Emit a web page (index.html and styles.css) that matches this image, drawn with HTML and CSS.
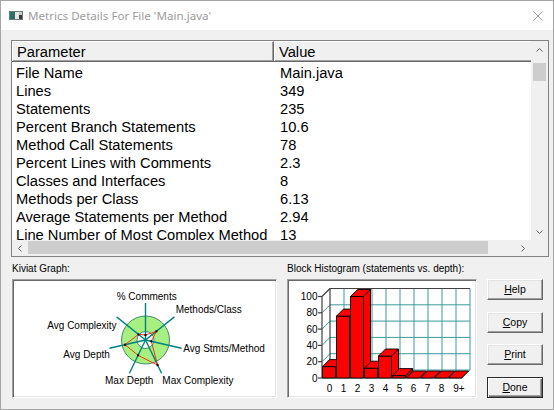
FILE: index.html
```html
<!DOCTYPE html>
<html>
<head>
<meta charset="utf-8">
<link rel="stylesheet" href="styles.css">
</head>
<body>
<div class="window">
  <div class="titlebar">
    <svg class="app-icon" width="14" height="9" viewBox="0 0 14 9">
      <rect x="0" y="0" width="14" height="9" fill="#6d7b7b"/>
      <rect x="1" y="1" width="5" height="7" fill="#2f6f6a"/>
      <rect x="6" y="1" width="4" height="7" fill="#e6e6e6"/>
      <rect x="10" y="1" width="3" height="3" fill="#c8c8c8"/>
      <rect x="10" y="4" width="3" height="4" fill="#3a3a3a"/>
    </svg>
    <span class="title">Metrics Details For File 'Main.java'</span>
    <svg class="close" width="10" height="10" viewBox="0 0 10 10">
      <path d="M0.5 0.5 L9.5 9.5 M9.5 0.5 L0.5 9.5" stroke="#999" stroke-width="1" fill="none"/>
    </svg>
  </div>
  <div class="client">
    <div class="list">
      <div class="list-main">
        <div class="list-header">
          <div class="hcell c1">Parameter</div>
          <div class="hcell c2">Value</div>
        </div>
        <div class="list-rows">
          <div class="row"><span class="c1">File Name</span><span class="c2">Main.java</span></div>
          <div class="row"><span class="c1">Lines</span><span class="c2">349</span></div>
          <div class="row"><span class="c1">Statements</span><span class="c2">235</span></div>
          <div class="row"><span class="c1">Percent Branch Statements</span><span class="c2">10.6</span></div>
          <div class="row"><span class="c1">Method Call Statements</span><span class="c2">78</span></div>
          <div class="row"><span class="c1">Percent Lines with Comments</span><span class="c2">2.3</span></div>
          <div class="row"><span class="c1">Classes and Interfaces</span><span class="c2">8</span></div>
          <div class="row"><span class="c1">Methods per Class</span><span class="c2">6.13</span></div>
          <div class="row"><span class="c1">Average Statements per Method</span><span class="c2">2.94</span></div>
          <div class="row"><span class="c1">Line Number of Most Complex Method</span><span class="c2">13</span></div>
        </div>
      </div>
      <div class="vscroll">
        <div class="sbtn vbtn">
          <svg width="7" height="4" viewBox="0 0 7 4"><polyline points="0.5,3.5 3.5,0.5 6.5,3.5" fill="none" stroke="#606060" stroke-width="1"/></svg>
        </div>
        <div class="vthumb"></div>
        <div class="sbtn vbtn vdown">
          <svg width="7" height="4" viewBox="0 0 7 4"><polyline points="0.5,0.5 3.5,3.5 6.5,0.5" fill="none" stroke="#606060" stroke-width="1"/></svg>
        </div>
      </div>
      <div class="hscroll">
        <div class="sbtn hbtn">
          <svg width="4" height="7" viewBox="0 0 4 7"><polyline points="3.5,0.5 0.5,3.5 3.5,6.5" fill="none" stroke="#606060" stroke-width="1"/></svg>
        </div>
        <div class="hthumb"></div>
        <div class="sbtn hbtn hright">
          <svg width="4" height="7" viewBox="0 0 4 7"><polyline points="0.5,0.5 3.5,3.5 0.5,6.5" fill="none" stroke="#606060" stroke-width="1"/></svg>
        </div>
      </div>
      <div class="corner"></div>
    </div>

    <div class="bottom">
      <div class="panel kiviat">
        <div class="panel-label">Kiviat Graph:</div>
        <div class="panel-box">
          <svg class="chart" width="263" height="117" viewBox="13 280 263 117">
            <circle cx="145.5" cy="340" r="24" fill="#a6ef80" stroke="#1f6f5f" stroke-width="0.8"/>
            <circle cx="145.5" cy="340" r="8.5" fill="#fff" stroke="#1f6f5f" stroke-width="0.8"/>
            <g stroke="#008080" stroke-width="1.4">
              <line x1="145.5" y1="340" x2="145.5" y2="303"/>
              <line x1="145.5" y1="340" x2="174.4" y2="316.9"/>
              <line x1="145.5" y1="340" x2="181.6" y2="348.2"/>
              <line x1="145.5" y1="340" x2="161.6" y2="373.3"/>
              <line x1="145.5" y1="340" x2="129.4" y2="373.3"/>
              <line x1="145.5" y1="340" x2="109.4" y2="348.2"/>
              <line x1="145.5" y1="340" x2="116.6" y2="316.9"/>
            </g>
            <polygon points="145.5,335 156.4,331.3 151.3,341.3 157.6,365.2 138.1,355.3 125,344.7 138.5,334.4" fill="none" stroke="#ff2000" stroke-width="0.9"/>
            <g fill="#000">
              <rect x="144.5" y="334" width="2" height="2"/>
              <rect x="155.4" y="330.3" width="2" height="2"/>
              <rect x="150.3" y="340.3" width="2" height="2"/>
              <rect x="156.6" y="364.2" width="2" height="2"/>
              <rect x="137.1" y="354.3" width="2" height="2"/>
              <rect x="124" y="343.7" width="2" height="2"/>
              <rect x="137.5" y="333.4" width="2" height="2"/>
            </g>
            <g class="klabel">
              <text x="116.7" y="300">% Comments</text>
              <text x="175.7" y="313.3">Methods/Class</text>
              <text x="183.3" y="352.3">Avg Stmts/Method</text>
              <text x="162.3" y="384.3">Max Complexity</text>
              <text x="105" y="384.3">Max Depth</text>
              <text x="63.3" y="358.3">Avg Depth</text>
              <text x="47.3" y="329">Avg Complexity</text>
            </g>
          </svg>
        </div>
      </div>

      <div class="panel hist">
        <div class="panel-label">Block Histogram (statements vs. depth):</div>
        <div class="panel-box">
          <svg class="chart" width="188" height="117" viewBox="288 280 188 117">
            <g stroke="#3a9a9a" stroke-width="1" fill="none">
              <line x1="330" y1="353.7" x2="470" y2="353.7"/>
              <line x1="330" y1="337.4" x2="470" y2="337.4"/>
              <line x1="330" y1="321.1" x2="470" y2="321.1"/>
              <line x1="330" y1="304.8" x2="470" y2="304.8"/>
              <line x1="330" y1="370" x2="470" y2="370"/>
              <line x1="344" y1="288.5" x2="344" y2="370"/>
              <line x1="358" y1="288.5" x2="358" y2="370"/>
              <line x1="372" y1="288.5" x2="372" y2="370"/>
              <line x1="386" y1="288.5" x2="386" y2="370"/>
              <line x1="400" y1="288.5" x2="400" y2="370"/>
              <line x1="414" y1="288.5" x2="414" y2="370"/>
              <line x1="428" y1="288.5" x2="428" y2="370"/>
              <line x1="442" y1="288.5" x2="442" y2="370"/>
              <line x1="456" y1="288.5" x2="456" y2="370"/>
              <line x1="470" y1="288.5" x2="470" y2="370"/>
              <line x1="322" y1="361.7" x2="330" y2="353.7"/>
              <line x1="322" y1="345.4" x2="330" y2="337.4"/>
              <line x1="322" y1="329.1" x2="330" y2="321.1"/>
              <line x1="322" y1="312.8" x2="330" y2="304.8"/>
              <line x1="322" y1="378" x2="330" y2="370"/>
              <line x1="336" y1="378" x2="344" y2="370"/>
              <line x1="350" y1="378" x2="358" y2="370"/>
              <line x1="364" y1="378" x2="372" y2="370"/>
              <line x1="378" y1="378" x2="386" y2="370"/>
              <line x1="392" y1="378" x2="400" y2="370"/>
              <line x1="406" y1="378" x2="414" y2="370"/>
              <line x1="420" y1="378" x2="428" y2="370"/>
              <line x1="434" y1="378" x2="442" y2="370"/>
              <line x1="448" y1="378" x2="456" y2="370"/>
              <line x1="462" y1="378" x2="470" y2="370"/>
            </g>
            <g stroke="#404040" stroke-width="1.2" fill="none">
              <line x1="322" y1="296.5" x2="322" y2="378"/>
              <line x1="322" y1="378" x2="462" y2="378"/>
              <line x1="330" y1="288.5" x2="330" y2="370"/>
              <line x1="322" y1="296.5" x2="330" y2="288.5"/>
              <line x1="330" y1="288.5" x2="470" y2="288.5"/>
              <line x1="318" y1="378" x2="322" y2="378"/>
              <line x1="318" y1="361.7" x2="322" y2="361.7"/>
              <line x1="318" y1="345.4" x2="322" y2="345.4"/>
              <line x1="318" y1="329.1" x2="322" y2="329.1"/>
              <line x1="318" y1="312.8" x2="322" y2="312.8"/>
              <line x1="318" y1="296.5" x2="322" y2="296.5"/>
            </g>
            <g fill="#ff0000" stroke="#000" stroke-width="0.9" stroke-linejoin="round">
              <rect x="322.5" y="366.6" width="13" height="11.4"/>
              <polygon points="335.5,366.6 342.5,359.6 342.5,371 335.5,378"/>
              <polygon points="322.5,366.6 329.5,359.6 342.5,359.6 335.5,366.6"/>
              <rect x="336.5" y="316.1" width="13" height="61.9"/>
              <polygon points="349.5,316.1 356.5,309.1 356.5,371 349.5,378"/>
              <polygon points="336.5,316.1 343.5,309.1 356.5,309.1 349.5,316.1"/>
              <rect x="350.5" y="296.5" width="13" height="81.5"/>
              <polygon points="363.5,296.5 370.5,289.5 370.5,371 363.5,378"/>
              <polygon points="350.5,296.5 357.5,289.5 370.5,289.5 363.5,296.5"/>
              <rect x="364.5" y="368.2" width="13" height="9.8"/>
              <polygon points="377.5,368.2 384.5,361.2 384.5,371 377.5,378"/>
              <polygon points="364.5,368.2 371.5,361.2 384.5,361.2 377.5,368.2"/>
              <rect x="378.5" y="356" width="13" height="22"/>
              <polygon points="391.5,356 398.5,349 398.5,371 391.5,378"/>
              <polygon points="378.5,356 385.5,349 398.5,349 391.5,356"/>
              <rect x="392.5" y="375.6" width="13" height="2.4"/>
              <polygon points="405.5,375.6 412.5,368.6 412.5,371 405.5,378"/>
              <polygon points="392.5,375.6 399.5,368.6 412.5,368.6 405.5,375.6"/>
              <polygon points="406.5,378 413.5,371 426.5,371 419.5,378"/>
              <polygon points="420.5,378 427.5,371 440.5,371 433.5,378"/>
              <polygon points="434.5,378 441.5,371 454.5,371 447.5,378"/>
              <polygon points="448.5,378 455.5,371 468.5,371 461.5,378"/>
            </g>
            <g class="axis" text-anchor="end">
              <text x="317.5" y="381.5">0</text>
              <text x="317.5" y="365.2">20</text>
              <text x="317.5" y="348.9">40</text>
              <text x="317.5" y="332.6">60</text>
              <text x="317.5" y="316.3">80</text>
              <text x="317.5" y="300">100</text>
            </g>
            <g class="axis" text-anchor="middle">
              <text x="329.5" y="391.5">0</text>
              <text x="343.5" y="391.5">1</text>
              <text x="357.5" y="391.5">2</text>
              <text x="371.5" y="391.5">3</text>
              <text x="385.5" y="391.5">4</text>
              <text x="399.5" y="391.5">5</text>
              <text x="413.5" y="391.5">6</text>
              <text x="427.5" y="391.5">7</text>
              <text x="441.5" y="391.5">8</text>
              <text x="459" y="391.5">9+</text>
            </g>
          </svg>
        </div>
      </div>

      <div class="buttons">
        <div class="btn"><u>H</u>elp</div>
        <div class="btn"><u>C</u>opy</div>
        <div class="btn"><u>P</u>rint</div>
        <div class="btn btn-default"><u>D</u>one</div>
      </div>
    </div>
  </div>
</div>
</body>
</html>
```
FILE: styles.css
```css
html, body {
  margin: 0;
  padding: 0;
  background: #f0f0f0;
}

.window {
  width: 554px;
  height: 410px;
  box-sizing: border-box;
  border: 1px solid #a6a6a6;
  background: #f0f0f0;
  display: flex;
  flex-direction: column;
  font-family: "Liberation Sans", Arial, sans-serif;
  color: #000;
  overflow: hidden;
}

.titlebar {
  height: 29px;
  flex: none;
  background: #fff;
  display: flex;
  align-items: center;
  padding-left: 8px;
  box-sizing: border-box;
}

.app-icon {
  display: block;
}

.title {
  margin-left: 5px;
  font-family: "Noto Sans", "Open Sans", sans-serif;
  font-size: 11.6px;
  color: #9c9c9c;
  white-space: nowrap;
}

.close {
  display: block;
  margin-left: auto;
  margin-right: 10px;
}

.client {
  flex: 1;
  padding: 10px 0 0 10px;
}

/* ---------- list view ---------- */
.list {
  width: 538px;
  height: 217px;
  box-sizing: border-box;
  border: 1px solid #828282;
  background: #fff;
  display: grid;
  grid-template-columns: 519px 17px;
  grid-template-rows: 199px 16px;
  font-size: 14.7px;
}

.list-main {
  overflow: hidden;
  background: #fff;
}

.list-header {
  display: flex;
  height: 21px;
  box-sizing: border-box;
  background: #f0f0f0;
  border-bottom: 1px solid #696969;
  box-shadow: inset 0 -1px 0 #a0a0a0;
}

.hcell {
  box-sizing: border-box;
  height: 20px;
  line-height: 19px;
  padding-top: 1px;
  white-space: nowrap;
  border-top: 1px solid #fff;
}

.hcell.c1 {
  width: 262px;
  padding-left: 5px;
  border-right: 1px solid #696969;
  box-shadow: inset -1px 0 0 #a0a0a0, inset 1px 0 0 #fff;
}

.hcell.c2 {
  flex: 1;
  padding-left: 5px;
  box-shadow: inset 1px 0 0 #fff;
}

.list-rows {
  padding-top: 2px;
}

.row {
  display: flex;
  height: 18px;
  line-height: 18px;
  white-space: nowrap;
}

.row .c1 {
  width: 262px;
  flex: none;
  padding-left: 4px;
  box-sizing: border-box;
}

.row .c2 {
  padding-left: 6px;
}

/* ---------- scrollbars ---------- */
.vscroll {
  background: #f0f0f0;
  display: flex;
  flex-direction: column;
}

.sbtn {
  display: flex;
  align-items: center;
  justify-content: center;
  flex: none;
}

.sbtn svg {
  display: block;
}

.vbtn {
  height: 17px;
}

.vdown {
  margin-top: auto;
  height: 16px;
}

.vthumb {
  margin: 5px 2px 0 2px;
  height: 18px;
  background: #cdcdcd;
}

.hscroll {
  background: #f0f0f0;
  display: flex;
  align-items: stretch;
}

.hbtn {
  width: 16px;
}

.hthumb {
  width: 460px;
  margin: 1px 0 2px 0;
  background: #cdcdcd;
}

.hright {
  margin-left: auto;
  width: 17px;
}

.corner {
  background: #f0f0f0;
}

/* ---------- bottom area ---------- */
.bottom {
  display: flex;
  gap: 10px;
  margin-top: 6px;
  margin-left: 1px;
}

.panel {
  display: flex;
  flex-direction: column;
}

.kiviat {
  width: 265px;
}

.hist {
  width: 190px;
}

.panel-label {
  font-size: 10px;
  line-height: 12px;
  height: 12px;
  margin-bottom: 4px;
  white-space: nowrap;
}

.panel-box {
  height: 119px;
  box-sizing: border-box;
  background: #fff;
  border: 1px solid;
  border-color: #a0a0a0 #fff #fff #a0a0a0;
  box-shadow: inset 1px 1px 0 #696969, inset -1px -1px 0 #e3e3e3;
}

.chart {
  display: block;
}

.klabel text,
.axis text {
  font-family: "Liberation Sans", Arial, sans-serif;
  font-size: 10px;
  fill: #000;
}

.buttons {
  width: 56px;
  height: 119px;
  margin-top: 16px;
  display: flex;
  flex-direction: column;
  justify-content: space-between;
}

.btn {
  height: 21px;
  box-sizing: border-box;
  background: #f0f0f0;
  border: 1px solid;
  border-color: #fff #696969 #696969 #fff;
  box-shadow: inset -1px -1px 0 #a0a0a0, inset 1px 1px 0 #e3e3e3;
  font-size: 10.5px;
  line-height: 19px;
  text-align: center;
}

.btn-default {
  border: 1px solid #2a2a2a;
  box-shadow: inset 1px 1px 0 #fff, inset -1px -1px 0 #696969, inset -2px -2px 0 #a0a0a0;
}
```
